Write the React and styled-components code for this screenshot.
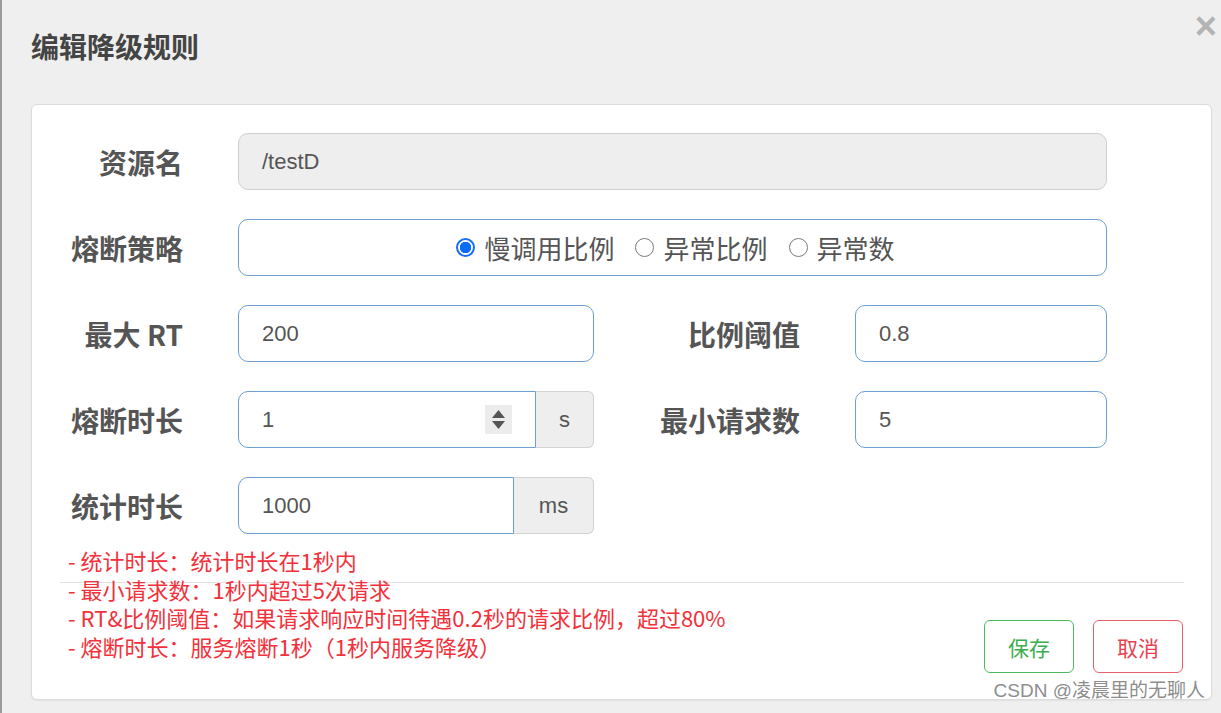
import React from 'react'
import styled, { createGlobalStyle } from 'styled-components'

const GlobalStyle = createGlobalStyle`
  html, body {
    margin: 0;
    padding: 0;
    background: #efefef;
  }
  body {
    font-family: "Liberation Sans", "Noto Sans CJK SC", sans-serif;
  }
`

const Modal = styled.div`
  position: relative;
  width: 1221px;
  height: 713px;
  box-sizing: border-box;
  border-left: 2px solid #9c9c9c;
  background: #efefef;
  overflow: hidden;
`

const Header = styled.div`
  display: flex;
  justify-content: space-between;
  align-items: flex-start;
  height: 104px;
  padding: 0 4px 0 29px;
  box-sizing: border-box;
`

const Title = styled.h4`
  margin: 29px 0 0;
  font-family: "Noto Sans CJK SC", sans-serif;
  font-size: 28px;
  line-height: 34px;
  font-weight: 700;
  color: #444;
`

const Close = styled.span`
  margin-top: 4px;
  font-family: "Liberation Sans", sans-serif;
  font-size: 38px;
  line-height: 44px;
  font-weight: 700;
  color: #b3b3b3;
`

const Card = styled.div`
  margin-left: 29px;
  width: 1181px;
  height: 596px;
  box-sizing: border-box;
  background: #fff;
  border: 1px solid #dcdcdc;
  border-radius: 6px;
  box-shadow: 0 1px 2px rgba(0, 0, 0, 0.06);
`

const Body = styled.div`
  padding: 28px 27px 0 28px;
`

const Form = styled.div`
  display: grid;
  grid-template-columns: 123px 356px 151px 252px;
  grid-auto-rows: 57px;
  column-gap: 55px;
  row-gap: 29px;
`

const Label = styled.label`
  display: flex;
  align-items: center;
  justify-content: flex-end;
  font-family: "Noto Sans CJK SC", sans-serif;
  font-size: 28px;
  font-weight: 700;
  color: #555;
  white-space: nowrap;
`

const Field = styled.div`
  grid-column: ${p => (p.$wide ? '2 / 5' : 'auto')};
  display: flex;
  align-items: center;
  box-sizing: border-box;
  height: 57px;
  padding: 0 23px;
  background: ${p => (p.$disabled ? '#eeeeee' : '#fff')};
  border: 1px solid ${p => (p.$disabled ? '#cfcfcf' : '#6d9fd2')};
  border-radius: ${p => (p.$group ? '10px 0 0 10px' : '10px')};
  font-size: 22px;
  color: #555;
  flex: ${p => (p.$group ? '1' : 'none')};
`

const Group = styled.div`
  display: flex;
`

const Addon = styled.div`
  display: flex;
  align-items: center;
  justify-content: center;
  width: ${p => p.$w}px;
  box-sizing: border-box;
  background: #eeeeee;
  border: 1px solid #d2d2d2;
  border-left: none;
  border-radius: 0 6px 6px 0;
  font-size: 22px;
  color: #555;
`

const Value = styled.span`
  flex: 1;
`

const Spinner = styled.span`
  display: flex;
  flex-direction: column;
  align-items: center;
  justify-content: center;
  gap: 3px;
  width: 27px;
  height: 29px;
  background: #ececec;
  svg { display: block; }
`

const Radios = styled.div`
  grid-column: 2 / 5;
  display: flex;
  align-items: center;
  justify-content: center;
  gap: 21px;
  box-sizing: border-box;
  padding-left: 6px;
  border: 1px solid #6d9fd2;
  border-radius: 10px;
  font-family: "Noto Sans CJK SC", sans-serif;
  font-size: 26px;
  color: #555;
`

const RadioItem = styled.span`
  display: flex;
  align-items: center;
  gap: 9px;
`

const Dot = styled.span`
  width: 19px;
  height: 19px;
  box-sizing: border-box;
  border-radius: 50%;
  border: ${p => (p.$on ? '2px solid #1a6ff0' : '1.5px solid #7a7a7a')};
  background: ${p => (p.$on ? 'radial-gradient(circle, #0b6cf5 0 5.5px, #fff 6px)' : '#fff')};
`

const Notes = styled.div`
  height: 36px;
  margin-top: 12px;
  padding-left: 8px;
  font-family: "Noto Sans CJK SC", sans-serif;
  font-size: 22px;
  line-height: 28.5px;
  color: #f2313b;
  white-space: nowrap;
`

const Footer = styled.div`
  display: flex;
  justify-content: flex-end;
  gap: 19px;
  margin: 0 27px 0 28px;
  padding: 37px 1px 0 0;
  border-top: 1px solid #e3e3e3;
`

const Button = styled.button`
  width: 90px;
  height: 53px;
  background: #fff;
  border: 1.5px solid ${p => p.$color};
  border-radius: 6px;
  font-family: "Noto Sans CJK SC", sans-serif;
  font-size: 21px;
  color: ${p => p.$text};
  cursor: pointer;
`

const Watermark = styled.span`
  position: absolute;
  right: 16px;
  bottom: 11px;
  font-family: "Liberation Sans", "Noto Sans CJK SC", sans-serif;
  font-size: 19px;
  line-height: 22px;
  color: rgba(110, 110, 110, 0.8);
`

const Radio = ({ on, children }) => (
  <RadioItem>
    <Dot $on={on} />
    {children}
  </RadioItem>
)

export default function App() {
  return (
    <Modal>
      <GlobalStyle />
      <Header>
        <Title>编辑降级规则</Title>
        <Close>×</Close>
      </Header>
      <Card>
        <Body>
          <Form>
            <Label>资源名</Label>
            <Field $wide $disabled>/testD</Field>

            <Label>熔断策略</Label>
            <Radios>
              <Radio on>慢调用比例</Radio>
              <Radio>异常比例</Radio>
              <Radio>异常数</Radio>
            </Radios>

            <Label>最大 RT</Label>
            <Field style={{ width: 356 }}>200</Field>
            <Label>比例阈值</Label>
            <Field style={{ width: 252 }}>0.8</Field>

            <Label>熔断时长</Label>
            <Group>
              <Field $group>
                <Value>1</Value>
                <Spinner>
                  <svg width="13" height="8" viewBox="0 0 13 8"><path d="M6.5 0L13 8H0z" fill="#555" /></svg>
                  <svg width="13" height="8" viewBox="0 0 13 8"><path d="M0 0h13L6.5 8z" fill="#555" /></svg>
                </Spinner>
              </Field>
              <Addon $w={58}>s</Addon>
            </Group>
            <Label>最小请求数</Label>
            <Field style={{ width: 252 }}>5</Field>

            <Label>统计时长</Label>
            <Group>
              <Field $group>1000</Field>
              <Addon $w={80}>ms</Addon>
            </Group>
          </Form>
          <Notes>
            <div>- 统计时长：统计时长在1秒内</div>
            <div>- 最小请求数：1秒内超过5次请求</div>
            <div>- RT&amp;比例阈值：如果请求响应时间待遇0.2秒的请求比例，超过80%</div>
            <div>- 熔断时长：服务熔断1秒（1秒内服务降级）</div>
          </Notes>
        </Body>
        <Footer>
          <Button $color="#4cbb5e" $text="#3aae4f">保存</Button>
          <Button $color="#e8606a" $text="#e8414c">取消</Button>
        </Footer>
      </Card>
      <Watermark>CSDN @凌晨里的无聊人</Watermark>
    </Modal>
  )
}
